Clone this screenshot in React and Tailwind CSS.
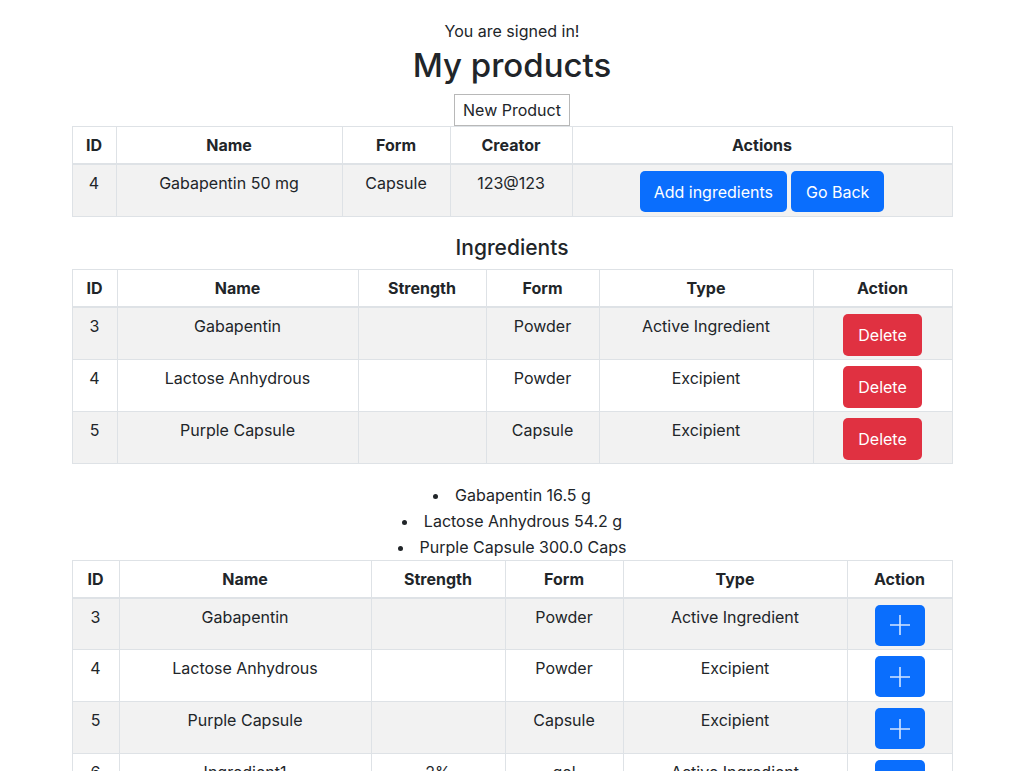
import React from "react";

const productCols = [
  { label: "ID", w: "w-[44px]" },
  { label: "Name", w: "w-[226px]" },
  { label: "Form", w: "w-[108px]" },
  { label: "Creator", w: "w-[122px]" },
  { label: "Actions", w: "w-[380px]" },
];

const ingredientCols = [
  { label: "ID", w: "w-[45px]" },
  { label: "Name", w: "w-[241px]" },
  { label: "Strength", w: "w-[128px]" },
  { label: "Form", w: "w-[113px]" },
  { label: "Type", w: "w-[214px]" },
  { label: "Action", w: "w-[139px]" },
];

const allCols = [
  { label: "ID", w: "w-[47px]" },
  { label: "Name", w: "w-[252px]" },
  { label: "Strength", w: "w-[134px]" },
  { label: "Form", w: "w-[118px]" },
  { label: "Type", w: "w-[224px]" },
  { label: "Action", w: "w-[105px]" },
];

const ingredients = [
  { id: 3, name: "Gabapentin", strength: "", form: "Powder", type: "Active Ingredient" },
  { id: 4, name: "Lactose Anhydrous", strength: "", form: "Powder", type: "Excipient" },
  { id: 5, name: "Purple Capsule", strength: "", form: "Capsule", type: "Excipient" },
];

const allIngredients = [
  ...ingredients,
  { id: 6, name: "Ingredient1", strength: "2%", form: "gel", type: "Active Ingredient" },
];

const amounts = ["Gabapentin 16.5 g", "Lactose Anhydrous 54.2 g", "Purple Capsule 300.0 Caps"];

function Table({ cols, children }) {
  return (
    <table className="w-[880px] table-fixed border-collapse border border-[#dee2e6] mb-4">
      <colgroup>
        {cols.map((c) => (
          <col key={c.label} className={c.w} />
        ))}
      </colgroup>
      <thead>
        <tr>
          {cols.map((c) => (
            <th
              key={c.label}
              className="border border-[#dee2e6] border-b-2 px-2 py-[6px] leading-6 font-bold text-center align-bottom"
            >
              {c.label}
            </th>
          ))}
        </tr>
      </thead>
      <tbody>{children}</tbody>
    </table>
  );
}

function Cell({ children }) {
  return (
    <td className="border border-[#dee2e6] px-2 pt-[6px] pb-[3px] h-[52px] leading-6 text-center align-top">
      {children}
    </td>
  );
}

function PlusIcon() {
  return (
    <svg width="22" height="22" viewBox="0 0 22 22" fill="none">
      <path d="M11 1v20M1 11h20" stroke="#d3e5ff" strokeWidth="1.6" />
    </svg>
  );
}

export default function App() {
  return (
    <div
      className="min-h-screen bg-white text-[#212529] text-base"
      style={{ fontFamily: "Inter, 'Liberation Sans', sans-serif" }}
    >
      <div className="w-[880px] mx-auto pt-[19px] flex flex-col items-center">
        <p className="leading-6">You are signed in!</p>
        <h1 className="text-[33px] leading-[44px] font-medium mb-[7px]">My products</h1>
        <button className="h-[32px] px-2 border border-[#b8b8b8] bg-white leading-6">
          New Product
        </button>

        <Table cols={productCols}>
          <tr className="bg-[#f2f2f2]">
            <Cell>4</Cell>
            <Cell>Gabapentin 50 mg</Cell>
            <Cell>Capsule</Cell>
            <Cell>123@123</Cell>
            <Cell>
              <div className="flex justify-center gap-1">
                <button className="h-[41px] px-[14px] rounded-[5px] bg-[#0a6efd] text-white">
                  Add ingredients
                </button>
                <button className="h-[41px] px-[15px] rounded-[5px] bg-[#0a6efd] text-white">
                  Go Back
                </button>
              </div>
            </Cell>
          </tr>
        </Table>

        <h4 className="text-[21px] leading-[28px] font-medium mt-[1px] mb-[7px]">Ingredients</h4>

        <Table cols={ingredientCols}>
          {ingredients.map((r, i) => (
            <tr key={r.id} className={i % 2 === 0 ? "bg-[#f2f2f2]" : "bg-white"}>
              <Cell>{r.id}</Cell>
              <Cell>{r.name}</Cell>
              <Cell>{r.strength}</Cell>
              <Cell>{r.form}</Cell>
              <Cell>{r.type}</Cell>
              <Cell>
                <button className="h-[42px] px-[15px] rounded-[5px] bg-[#e03141] text-white">
                  Delete
                </button>
              </Cell>
            </tr>
          ))}
        </Table>

        <ul className="list-disc list-inside text-center leading-[26px] pt-[2px]">
          {amounts.map((a) => (
            <li key={a}>{a}</li>
          ))}
        </ul>

        <Table cols={allCols}>
          {allIngredients.map((r, i) => (
            <tr key={r.id} className={i % 2 === 0 ? "bg-[#f2f2f2]" : "bg-white"}>
              <Cell>{r.id}</Cell>
              <Cell>{r.name}</Cell>
              <Cell>{r.strength}</Cell>
              <Cell>{r.form}</Cell>
              <Cell>{r.type}</Cell>
              <Cell>
                <button className="w-[50px] h-[41px] rounded-[5px] bg-[#0a6efd] inline-flex items-center justify-center">
                  <PlusIcon />
                </button>
              </Cell>
            </tr>
          ))}
        </Table>
      </div>
    </div>
  );
}
